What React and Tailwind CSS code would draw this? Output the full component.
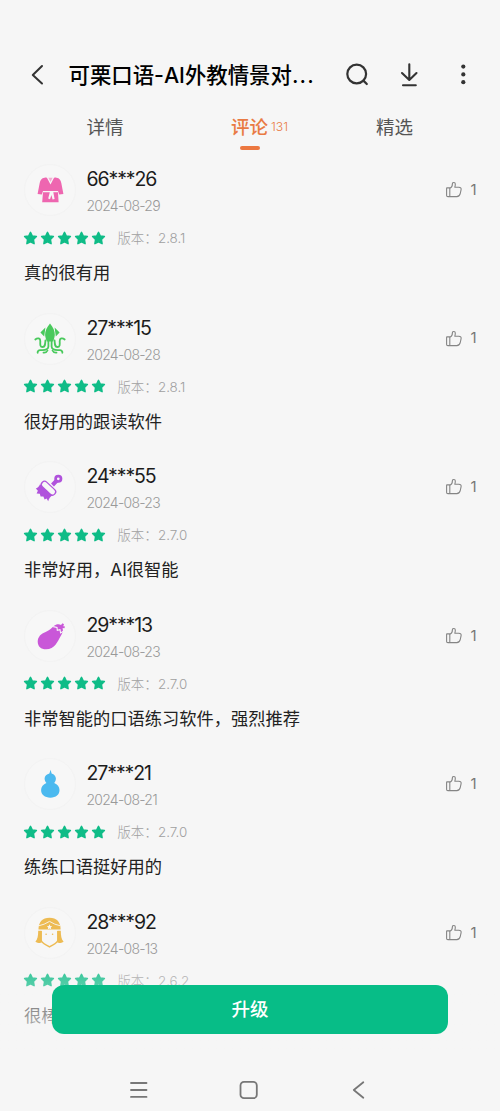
const reviews = [
  { id: 1, icon: 'robe', name: '66***26', date: '2024-08-29', version: '2.8.1', text: '真的很有用', likes: 1 },
  { id: 2, icon: 'squid', name: '27***15', date: '2024-08-28', version: '2.8.1', text: '很好用的跟读软件', likes: 1 },
  { id: 3, icon: 'brush', name: '24***55', date: '2024-08-23', version: '2.7.0', text: '非常好用，AI很智能', likes: 1 },
  { id: 4, icon: 'eggplant', name: '29***13', date: '2024-08-23', version: '2.7.0', text: '非常智能的口语练习软件，强烈推荐', likes: 1 },
  { id: 5, icon: 'gourd', name: '27***21', date: '2024-08-21', version: '2.7.0', text: '练练口语挺好用的', likes: 1 },
  { id: 6, icon: 'guard', name: '28***92', date: '2024-08-13', version: '2.6.2', text: '很棒', likes: 1 }
]

const avatars = {
  robe: (
    <g fill="#ee66b0">
      <path d="M20.5 13.8 C22 13.2 23 13.4 23.2 14.2 L26.5 20.5 L29.8 14.2 C30 13.4 31 13.2 32.5 13.8 C35.5 14.3 36.7 16 37.3 19 L39.4 30 L35.2 30.5 L34 27 H19 L17.8 30.5 L13.6 30 L15.7 19 C16.4 16 17.5 14.3 20.5 13.8Z" />
      <path d="M24.4 13.8 H28.6 L26.5 18Z" opacity="0.5" />
      <path d="M19 28.2 H25.8 L24.2 34.6 L26 35.2 L27.4 31 L28.6 35.6 L30.6 35 L29.3 28.2 H34 L34.6 38.3 H18.2Z" />
    </g>
  ),
  squid: (
    <g fill="none" stroke="#49c95c" strokeWidth="1.8" strokeLinecap="round">
      <path d="M26 10.6 C29.3 14.5 31 18.5 30.8 22 C30.6 24.5 29.8 26.5 29.2 28.5 H22.8 C22.2 26.5 21.3 24.5 21.1 22 C21 18.5 22.7 14.5 26 10.6Z" fill="#49c95c" stroke="none" />
      <path d="M21.4 14.6 L16.4 19.5 L20.2 23.6Z M30.6 14.6 L35.6 19.5 L31.8 23.6Z" fill="#49c95c" stroke="none" />
      <path d="M11.3 26.5 C13.8 24.3 16.5 25.3 16.3 28.3 C16.2 31 15.8 34 18.6 34 C21.2 34 21.2 31.5 21.4 27.5" />
      <path d="M40.7 26.5 C38.2 24.3 35.5 25.3 35.7 28.3 C35.8 31 36.2 34 33.4 34 C30.8 34 30.8 31.5 30.6 27.5" />
      <path d="M24.4 28 V33.5 C24.2 38 19 36.8 16 37.2 C13.5 37.5 13.5 39.5 13.7 39.8" />
      <path d="M27.6 28 V33.5 C27.8 38 33 36.8 36 37.2 C38.5 37.5 38.5 39.5 38.3 39.8" />
      <path d="M23.5 37.5 C22.5 39.7 21 39.8 19.5 39.6 M28.5 37.5 C29.5 39.7 31 39.8 32.5 39.6" />
    </g>
  ),
  brush: (
    <g fill="#b052dc">
      <path d="M32.8 19.5 L28.5 24" stroke="#b052dc" strokeWidth="4" />
      <circle cx="34.3" cy="17.8" r="2.7" fill="#f7f7f7" stroke="#b052dc" strokeWidth="2.7" />
      <path d="M16 23.2 C15.3 25.6 13.4 26.8 11.8 27.6 L13.9 29.8 L12.6 32.6 L15.8 32.8 L16.6 35.6 L19.4 35.6 L20.6 38.6 L22.6 37.6 L24.2 40.2 C25 37.6 26.2 36 28.4 34.3Z" />
      <rect x="16" y="24" width="17" height="6.4" rx="3" fill="#f7f7f7" stroke="#b052dc" strokeWidth="1.3" transform="rotate(43 24.5 27.2)" />
    </g>
  ),
  eggplant: (
    <g>
      <path d="M30.5 15.6 C33 13.8 35.3 14 37 15 L38.6 13.2 L40 14.2 L39.2 16.2 L41 16.6 L40.4 18.2 L38.6 18 C39.6 21 38.2 23.6 36.6 26.3 C33.6 31.3 31 39.3 22 39.3 C17 39.3 13.7 36.2 13.7 31.7 C13.7 26.8 17.2 23.6 21.6 22 C26 20.4 27.6 17.8 30.5 15.6Z" fill="#c957d8" />
      <path d="M29.2 16.6 L33 17.5 L33.3 20.3 L36 19.6 L36.6 23 L39 21.6" fill="none" stroke="#f7f7f7" strokeWidth="1.1" />
    </g>
  ),
  gourd: (
    <path d="M25.4 15.4 L26.6 11.8 L27.6 15.4 C30.2 16 31.9 18.1 31.9 20.5 C31.9 22.4 31.2 23.7 30.2 24.9 C33.5 26.2 35.5 28.8 35.5 32.1 C35.5 36.9 32 39.7 26.4 39.7 C20.8 39.7 17.1 36.8 17.1 32.1 C17.1 28.7 19.3 26.2 22.4 24.9 C21.3 23.8 20.6 22.3 20.6 20.5 C20.6 17.9 22.8 15.9 25.4 15.4Z" fill="#4bb9ef" />
  ),
  guard: (
    <g fill="#edbb53">
      <path d="M14.5 22.6 C14.5 15 18.3 10.8 25.5 10.8 C32.7 10.8 36.6 15 36.6 22.6Z" />
      <path d="M15 18.7 Q20 17.8 25.5 14.4 Q31 17.8 36 18.7" fill="none" stroke="#f7f7f7" strokeWidth="0.9" />
      <path d="M25.5 17.3 L26.3 19 L28.2 19.2 L26.8 20.5 L27.2 22.3 L25.5 21.4 L23.8 22.3 L24.2 20.5 L22.8 19.2 L24.7 19Z" fill="#f7f7f7" />
      <path d="M14.2 23.8 H17.5 V35.8 C15.5 36.2 13 35.8 11.4 34.7 C13.6 32.5 14.2 28.5 14.2 23.8Z M36.8 23.8 H33.5 V35.8 C35.5 36.2 38 35.8 39.6 34.7 C37.4 32.5 36.8 28.5 36.8 23.8Z" />
      <path d="M17.2 24 V33 C17.2 36.4 22 37.5 25.5 39.8 C29 37.5 33.8 36.4 33.8 33 V24" fill="none" stroke="#edbb53" strokeWidth="1.4" />
      <circle cx="22.1" cy="27.3" r="0.8" />
      <circle cx="28.6" cy="27.3" r="0.8" />
    </g>
  )
}

const Avatar = ({ icon }) => (
  <div className="size-[52px] shrink-0 rounded-full border border-[#f3f3f3] bg-[#f7f7f7]">
    <svg viewBox="0 0 52 52" className="-m-px size-[52px]">{avatars[icon]}</svg>
  </div>
)

const Stars = () => (
  <div className="-ml-[0.6px] flex gap-[2px]">
    {[1, 2, 3, 4, 5].map((n) => (
      <svg key={n} viewBox="0 0 15 15" className="size-[15px]">
        <path
          d="M7.5 1.3 L9.3 5 L13.4 5.5 L10.4 8.4 L11.1 12.7 L7.5 10.8 L3.9 12.7 L4.6 8.4 L1.6 5.5 L5.7 5Z"
          fill="#0fbc87"
          stroke="#0fbc87"
          strokeWidth="1.5"
          strokeLinejoin="round"
        />
      </svg>
    ))}
  </div>
)

const ThumbUp = () => (
  <svg viewBox="0 0 18 18" className="size-[18px]" fill="none" stroke="#858585" strokeWidth="1.1" strokeLinejoin="round">
    <path d="M1.9 6.9 H5.4 C7.3 6.2 7.4 4.6 7.4 2.8 C7.4 1 10.3 1 10.3 3 C10.3 4.6 10.1 5.4 9.8 6.2 H13.8 C15.5 6.2 16.4 7.2 16.1 8.7 L15.3 12.4 C14.8 14.6 13.6 15.6 11.8 15.6 H2.9 C2 15.6 1.6 15.2 1.6 14.4 V7.5 Q1.6 6.9 1.9 6.9Z M4.8 7 V15.6" />
  </svg>
)

const Review = ({ review }) => (
  <article className="h-[148.6px] px-6">
    <div className="flex h-[52px]">
      <Avatar icon={review.icon} />
      <div className="ml-[10.5px] flex-1">
        <p className="mt-[3px] h-[24px] text-[19.5px] leading-[24px] tracking-[-1.1px] text-[#1c1c1c]">{review.name}</p>
        <p className="mt-[5px] text-[14px] font-light leading-[20px] tracking-[-0.75px] text-[#999]">{review.date}</p>
      </div>
      <div className="-mr-[1.5px] flex h-[52px] items-center gap-[8px] text-[15px] text-[#777]">
        <ThumbUp />
        <span className="w-[7px]">{review.likes}</span>
      </div>
    </div>
    <div className="mt-[12px] flex h-[20px] items-center">
      <Stars />
      <p className="ml-[11px] flex text-[13.4px] font-light leading-[20px] text-[#a0a0a0]">
        <span className="w-[40.5px] whitespace-nowrap">版本：</span>
        <span>{review.version}</span>
      </p>
    </div>
    <p className="mt-[12px] whitespace-nowrap text-[17.25px] leading-[25px] text-[#222]">{review.text}</p>
  </article>
)

const Header = () => (
  <header className="flex h-[50px] items-center pl-[30px] text-[#333]">
    <svg viewBox="0 0 16 22" className="h-[22px] w-4" fill="none" stroke="currentColor" strokeWidth="2" strokeLinecap="round" strokeLinejoin="round">
      <path d="M12 2 L2.8 11 L12 19.5" />
    </svg>
    <h1 className="ml-[22.5px] flex w-[249.5px] whitespace-nowrap text-[21.4px] font-medium leading-[30px] text-black">
      可栗口语-AI外教情景对<span className="tracking-[1.2px]">...</span>
    </h1>
    <svg viewBox="0 0 24 24" className="ml-[27px] size-6" fill="none" stroke="currentColor" strokeWidth="2.2" strokeLinecap="round">
      <circle cx="11.7" cy="11" r="9.4" />
      <path d="M18.4 17.6 L21.8 21" />
    </svg>
    <svg viewBox="0 0 20 24" className="ml-[30px] h-6 w-5" fill="none" stroke="currentColor" strokeWidth="2.1" strokeLinecap="round" strokeLinejoin="round">
      <path d="M10.3 1.3 V16.5 M3 10 L10.3 17 L17.5 10 M4 22.2 H16.8" />
    </svg>
    <svg viewBox="0 0 8 24" className="ml-[40px] h-6 w-2" fill="currentColor">
      <circle cx="4.3" cy="3.6" r="2.1" />
      <circle cx="4.3" cy="11.4" r="2.1" />
      <circle cx="4.3" cy="19.2" r="2.1" />
    </svg>
  </header>
)

const Tabs = () => (
  <nav className="flex h-[52px] pt-[12px] text-[18.5px] leading-[30px] text-[#555]">
    <span className="ml-[86.5px] w-[144.5px]">详情</span>
    <div className="w-[145px] text-[#e97a43]">
      <div className="flex">
        <span className="w-[40px] font-medium">评论</span>
        <span className="text-[12.2px] font-light">131</span>
      </div>
      <div className="ml-[9px] mt-[4px] h-[4px] w-5 rounded-full bg-[#ec7840]" />
    </div>
    <span>精选</span>
  </nav>
)

const App = () => {
  return (
    <div className="relative h-[1111px] w-[500px] overflow-hidden bg-[#f6f6f6] pt-[50px] font-[Inter,'Noto_Sans_CJK_SC',sans-serif]">
      <Header />
      <Tabs />
      <main className="pt-[12px]">
        {reviews.map((review) => (
          <Review key={review.id} review={review} />
        ))}
      </main>

      {/* fixed bottom area, fades out the list behind it */}
      <footer className="absolute inset-x-0 bottom-0 h-[161px]">
        <div className="h-[100px] bg-linear-to-b from-[#f6f6f6]/0 to-[#f6f6f6]/85 px-[52px] pt-[35px]">
          <button className="h-[49px] w-full rounded-xl bg-[#07bd87] text-[18.5px] font-medium text-white">
            升级
          </button>
        </div>
        <div className="flex h-[61px] items-center bg-[#f6f6f6] pl-[129px] pt-[19px]">
          <svg viewBox="0 0 20 20" className="size-5" fill="none" stroke="#777" strokeWidth="1.8" strokeLinecap="round">
            <path d="M2 3 H17.5 M2 10 H17.5 M2 16.9 H17.5" />
          </svg>
          <svg viewBox="0 0 20 20" className="ml-[90px] size-5" fill="none" stroke="#777" strokeWidth="1.8">
            <rect x="1.5" y="1.9" width="16.3" height="16.3" rx="3.5" />
          </svg>
          <svg viewBox="0 0 20 20" className="ml-[90px] size-5" fill="none" stroke="#777" strokeWidth="1.8" strokeLinecap="round" strokeLinejoin="round">
            <path d="M14.3 2.3 L4.8 10 L14.3 17.8" />
          </svg>
        </div>
      </footer>
    </div>
  )
}

export default App
